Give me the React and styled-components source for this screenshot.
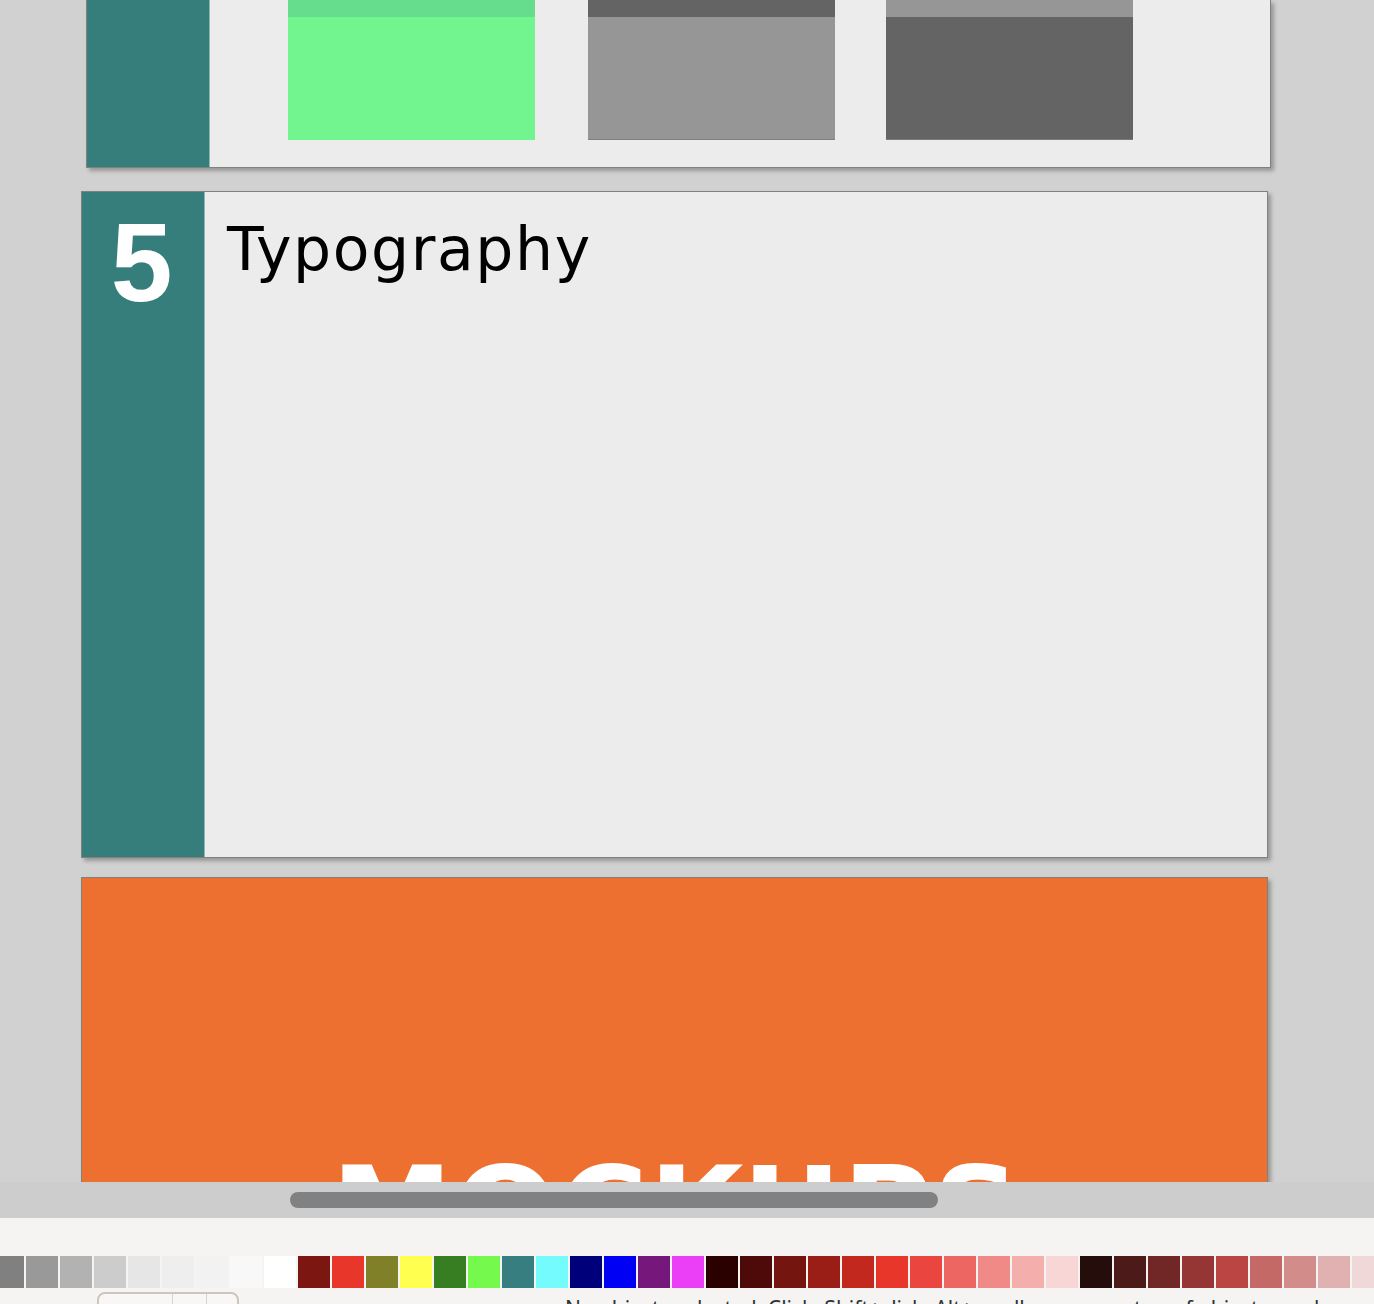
import React from 'react'
import styled, { createGlobalStyle } from 'styled-components'

const GlobalStyle = createGlobalStyle`
  html, body {
    margin: 0;
    padding: 0;
    background: #f5f4f2;
  }
  body {
    font-family: "DejaVu Sans", "Liberation Sans", sans-serif;
    overflow: hidden;
  }
`

const Window = styled.div`
  width: 1374px;
  height: 1304px;
  display: flex;
  flex-direction: column;
  overflow: hidden;
`

const Canvas = styled.div`
  height: 1182px;
  flex-shrink: 0;
  background: #d1d1d1;
  overflow: hidden;
  display: flex;
  flex-direction: column;
`

const Slide = styled.div`
  flex-shrink: 0;
  margin-left: ${(p) => p.left}px;
  margin-top: ${(p) => p.top || 0}px;
  width: ${(p) => p.width}px;
  height: ${(p) => p.height}px;
  background: ${(p) => p.bg || '#ececec'};
  border: 1px solid #7e847c;
  border-top: ${(p) => (p.cut ? 'none' : '1px solid #7e847c')};
  box-shadow: 3px 3px 4px rgba(0, 0, 0, 0.28);
  display: flex;
  box-sizing: border-box;
  overflow: hidden;
`

const SideBar = styled.div`
  width: 123px;
  flex-shrink: 0;
  background: #367e7b;
  border-right: 1px solid #8fb7b3;
  box-sizing: border-box;
  display: flex;
  justify-content: center;
  align-items: flex-start;
`

const SlideNumber = styled.div`
  color: #ffffff;
  font-family: "Liberation Sans", Arial, sans-serif;
  font-weight: 700;
  font-size: 111px;
  line-height: 1;
  margin-top: 16px;
  margin-left: -3px;
`

const SlideBody = styled.div`
  flex: 1;
  display: flex;
  align-items: flex-start;
`

const SwatchRow = styled.div`
  display: flex;
  padding-left: 78px;
`

const ColorBox = styled.div`
  width: 247px;
  height: 140px;
  margin-left: ${(p) => p.space || 0}px;
  background: ${(p) => p.body};
  border-top: 17px solid ${(p) => p.stripe};
  border-bottom: 1px solid ${(p) => p.edge || p.body};
  box-sizing: border-box;
`

const Title = styled.h1`
  margin: 21px 0 0 22px;
  font-family: "DejaVu Sans", sans-serif;
  font-weight: normal;
  font-size: 60px;
  letter-spacing: 1.6px;
  color: #000000;
  line-height: 1.2;
`

const Cover = styled.div`
  flex: 1;
  display: flex;
  justify-content: center;
  align-items: center;
  padding-left: 4px;
`

const CoverTitle = styled.div`
  color: #ffffff;
  font-family: "DejaVu Sans", sans-serif;
  font-weight: bold;
  font-size: 122px;
  line-height: 1;
  letter-spacing: 1px;
`

const ScrollTrack = styled.div`
  height: 36px;
  flex-shrink: 0;
  background: #cdcdcd;
  display: flex;
  align-items: center;
  padding-left: 290px;
`

const ScrollThumb = styled.div`
  width: 648px;
  height: 16px;
  border-radius: 8px;
  background: #808183;
`

const BottomPanel = styled.div`
  flex: 1;
  background: #f5f4f2;
  display: flex;
  flex-direction: column;
  padding-top: 38px;
  overflow: hidden;
`

const Palette = styled.div`
  display: flex;
  gap: 2px;
  margin-left: -8px;
  height: 32px;
  flex-shrink: 0;
`

const Swatch = styled.div`
  width: 32px;
  height: 32px;
  flex-shrink: 0;
  background: ${(p) => p.color};
`

const StatusBar = styled.div`
  display: flex;
  align-items: flex-start;
  padding-top: 4px;
  height: 40px;
`

const StyleBox = styled.div`
  margin-left: 97px;
  width: 142px;
  height: 30px;
  border: 2px solid #cdc6bf;
  border-radius: 8px;
  box-sizing: border-box;
  display: flex;
  background: #f8f7f5;
`

const StyleCell = styled.div`
  width: ${(p) => p.w}px;
  border-right: ${(p) => (p.last ? 'none' : '1px solid #d8d3ce')};
`

const StatusText = styled.div`
  margin-left: 326px;
  margin-top: 2px;
  font-family: "Noto Sans", "DejaVu Sans", sans-serif;
  font-size: 21px;
  color: #2e3436;
  white-space: nowrap;
`

const paletteColors = [
  '#808080', '#999999', '#b2b2b2', '#cccccc', '#e6e6e6', '#eeeeee', '#f2f2f2', '#f8f8f8', '#ffffff',
  '#7b1610', '#e8362a', '#808028', '#ffff50', '#377d22', '#75f94d', '#367e7f', '#73fbfd', '#00007b',
  '#0000f5', '#75177b', '#ea3ff7',
  '#2b0100', '#4e0a08', '#75150f', '#9a1e15', '#c2281e', '#e8362a', '#eb4540', '#ed6662', '#f08a86',
  '#f4aeac', '#f8d6d5',
  '#250d0c', '#4b1a19', '#712726', '#953534', '#ba4543', '#c56966', '#d28c8a', '#e0b1b0', '#efd8d7',
]

export default function App() {
  return (
    <Window>
      <GlobalStyle />
      <Canvas>
        <Slide left={86} width={1185} height={168} cut>
          <SideBar />
          <SlideBody>
            <SwatchRow>
              <ColorBox stripe="#66dd8d" body="#72f48f" />
              <ColorBox space={53} stripe="#646464" body="#969696" edge="#808080" />
              <ColorBox space={51} stripe="#969696" body="#646464" edge="#7a7a7a" />
            </SwatchRow>
          </SlideBody>
        </Slide>

        <Slide left={81} top={23} width={1187} height={667}>
          <SideBar>
            <SlideNumber>5</SlideNumber>
          </SideBar>
          <SlideBody>
            <Title>Typography</Title>
          </SlideBody>
        </Slide>

        <Slide left={81} top={19} width={1187} height={667} bg="#ed7030">
          <Cover>
            <CoverTitle>MOCKUPS</CoverTitle>
          </Cover>
        </Slide>
      </Canvas>

      <ScrollTrack>
        <ScrollThumb />
      </ScrollTrack>

      <BottomPanel>
        <Palette>
          {paletteColors.map((c, i) => (
            <Swatch key={i} color={c} />
          ))}
        </Palette>
        <StatusBar>
          <StyleBox>
            <StyleCell w={74} />
            <StyleCell w={34} />
            <StyleCell w={30} last />
          </StyleBox>
          <StatusText>
            No objects selected. Click, Shift+click, Alt+scroll mouse on top of objects, or drag around objects to select.
          </StatusText>
        </StatusBar>
      </BottomPanel>
    </Window>
  )
}
